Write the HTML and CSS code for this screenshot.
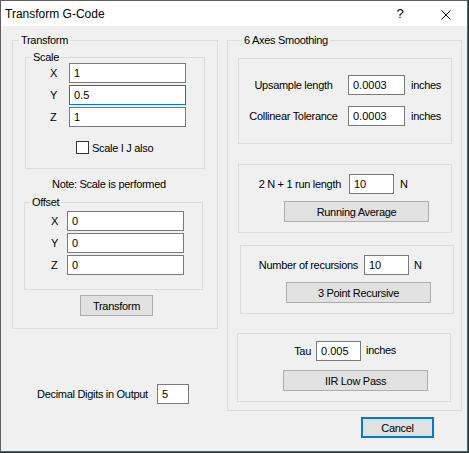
FILE: index.html
```html
<!DOCTYPE html>
<html lang="en">
<head>
  <meta charset="UTF-8">
  <title>Transform G-Code</title>
  <link rel="stylesheet" href="styles.css">
</head>
<body>
  <div class="window">
    <div class="titlebar">
      <span class="title">Transform G-Code</span>
      <span class="help">?</span>
      <svg class="close" width="10" height="10" viewBox="0 0 10 10">
        <path d="M0.5 0.5 L9.5 9.5 M9.5 0.5 L0.5 9.5" stroke="#000" stroke-width="1" fill="none"/>
      </svg>
    </div>

    <div class="client">
      <div class="left-col">
        <fieldset class="group transform">
          <legend>Transform</legend>

          <fieldset class="group scale">
            <legend>Scale</legend>
            <div class="axes">
              <div class="axis-row"><label>X</label><input class="field" value="1"></div>
              <div class="axis-row"><label>Y</label><input class="field focused" value="0.5"></div>
              <div class="axis-row"><label>Z</label><input class="field" value="1"></div>
            </div>
            <label class="check"><input type="checkbox"><span>Scale I J also</span></label>
          </fieldset>

          <p class="note">Note: Scale is performed</p>

          <fieldset class="group offset">
            <legend>Offset</legend>
            <div class="axes">
              <div class="axis-row"><label>X</label><input class="field" value="0"></div>
              <div class="axis-row"><label>Y</label><input class="field" value="0"></div>
              <div class="axis-row"><label>Z</label><input class="field" value="0"></div>
            </div>
          </fieldset>

          <button class="btn btn-transform">Transform</button>
        </fieldset>

        <div class="digits-row">
          <label>Decimal Digits in Output</label>
          <input class="field digits" value="5">
        </div>
      </div>

      <div class="right-col">
        <fieldset class="group smoothing">
          <legend>6 Axes Smoothing</legend>

          <div class="box upsample">
            <label>Upsample length</label>
            <input class="field" value="0.0003">
            <span class="unit">inches</span>
            <label>Collinear Tolerance</label>
            <input class="field" value="0.0003">
            <span class="unit">inches</span>
          </div>

          <div class="box running">
            <div class="param-row">
              <label>2 N + 1 run length</label>
              <input class="field short" value="10">
              <span class="unit">N</span>
            </div>
            <button class="btn btn-wide">Running Average</button>
          </div>

          <div class="box recursive">
            <div class="param-row">
              <label>Number of recursions</label>
              <input class="field short" value="10">
              <span class="unit">N</span>
            </div>
            <button class="btn btn-wide">3 Point Recursive</button>
          </div>

          <div class="box lowpass">
            <div class="param-row">
              <label>Tau</label>
              <input class="field short" value="0.005">
              <span class="unit">inches</span>
            </div>
            <button class="btn btn-wide">IIR Low Pass</button>
          </div>
        </fieldset>

        <button class="btn btn-cancel">Cancel</button>
      </div>
    </div>
  </div>
</body>
</html>
```

FILE: styles.css
```css
* {
  box-sizing: border-box;
}
body {
  margin: 0;
  background-color: #1f3b3b;
  font-family: "Liberation Sans", Arial, sans-serif;
  font-size: 11px;
  letter-spacing: -0.3px;
  color: #000;
}
.window {
  width: 468px;
  height: 452px;
  border: 1px solid #5f5f5f;
  background-color: #f0f0f0;
}
.titlebar {
  height: 25px;
  background-color: #fff;
  display: flex;
  align-items: center;
  font-size: 12px;
  letter-spacing: 0;
}
.title {
  padding-left: 4px;
}
.help {
  margin-left: auto;
  width: 8px;
  margin-right: 37px;
  text-align: center;
  font-size: 13px;
}
.close {
  margin-right: 16px;
  margin-top: 2px;
}
.client {
  display: flex;
  padding-left: 11px;
}

/* group boxes */
.group {
  margin: 0;
  padding: 0;
  min-width: 0;
  border: 1px solid #dcdcdc;
}
.group > legend {
  padding: 0 2px;
  margin-left: 6px;
  line-height: 14px;
}
.field {
  height: 20px;
  border: 1px solid #7a7a7a;
  background-color: #fff;
  padding: 0 4px;
  font: inherit;
  letter-spacing: 0;
  color: #000;
  outline: none;
}
.field.focused {
  border-color: #0078d7;
}
.btn {
  display: block;
  height: 21px;
  padding: 0;
  border: 1px solid #adadad;
  background-color: #e1e1e1;
  font: inherit;
  letter-spacing: -0.3px;
  color: #000;
}

/* left column */
.left-col {
  width: 206px;
}
.transform {
  margin-top: 7px;
  width: 206px;
  padding-bottom: 12px;
}
.scale {
  margin: 3px 0 0 12px;
  width: 180px;
  padding-bottom: 14px;
}
.scale > legend,
.offset > legend {
  margin-left: 5px;
}
.axes {
  display: flex;
  flex-direction: column;
  gap: 2px;
}
.axis-row {
  display: flex;
  align-items: center;
  height: 20px;
}
.axis-row .field {
  width: 117px;
}
.scale .axes {
  margin-top: -1px;
  padding-left: 24px;
}
.scale .axis-row label {
  width: 19px;
}
.check {
  display: flex;
  align-items: center;
  gap: 3px;
  margin: 14px 0 0 50px;
  height: 13px;
}
.check input {
  appearance: none;
  margin: 0;
  width: 13px;
  height: 13px;
  border: 1px solid #333;
  background-color: #fff;
}
.note {
  margin: 8px 0 0;
  padding-left: 39px;
  line-height: 14px;
}
.offset {
  margin: 4px 0 0 11px;
  width: 179px;
  padding-bottom: 14px;
}
.offset .axes {
  margin-top: 2px;
  padding-left: 26px;
}
.offset .axis-row label {
  width: 16px;
}
.btn-transform {
  margin: 5px 0 0 67px;
  width: 73px;
}
.digits-row {
  display: flex;
  align-items: center;
  margin: 55px 0 0 25px;
}
.digits-row label {
  width: 120px;
}
.digits {
  width: 32px;
}

/* right column */
.right-col {
  margin-left: 9px;
  width: 235px;
}
.smoothing {
  margin-top: 7px;
  width: 235px;
  padding: 0 0 8px 10px;
}
.smoothing > legend {
  margin-left: 4px;
}
.box {
  width: 214px;
  border: 1px solid #dcdcdc;
}
.upsample {
  margin-top: 11px;
  padding: 16px 0 17px;
  display: grid;
  grid-template-columns: 109px 57px auto;
  row-gap: 11px;
  align-items: center;
}
.upsample label {
  text-align: center;
}
.upsample .unit {
  margin-left: 6px;
}
.param-row {
  display: flex;
  align-items: center;
}
.param-row label {
  text-align: right;
}
.short {
  width: 45px;
}
.btn-wide {
  width: 145px;
  margin-left: 45px;
}
.running {
  margin-top: 20px;
  padding: 9px 0 10px;
}
.running label {
  width: 110px;
  padding-right: 8px;
}
.running .unit {
  margin-left: 6px;
}
.running .btn {
  margin-top: 7px;
}
.recursive {
  margin: 12px 0 0 2px;
  padding: 9px 0 10px;
}
.recursive label {
  width: 123px;
  padding-right: 6px;
}
.recursive .unit {
  margin-left: 5px;
}
.recursive .btn {
  margin-top: 7px;
}
.lowpass {
  margin: 19px 0 0 -1px;
  padding: 7px 0 10px;
}
.lowpass label {
  width: 78px;
  padding-right: 5px;
}
.lowpass .unit {
  margin: 0 0 2px 5px;
}
.lowpass .btn {
  margin-top: 9px;
}
.btn-cancel {
  margin: 6px 0 0 134px;
  width: 73px;
  border: 2px solid #0078d7;
}
```
